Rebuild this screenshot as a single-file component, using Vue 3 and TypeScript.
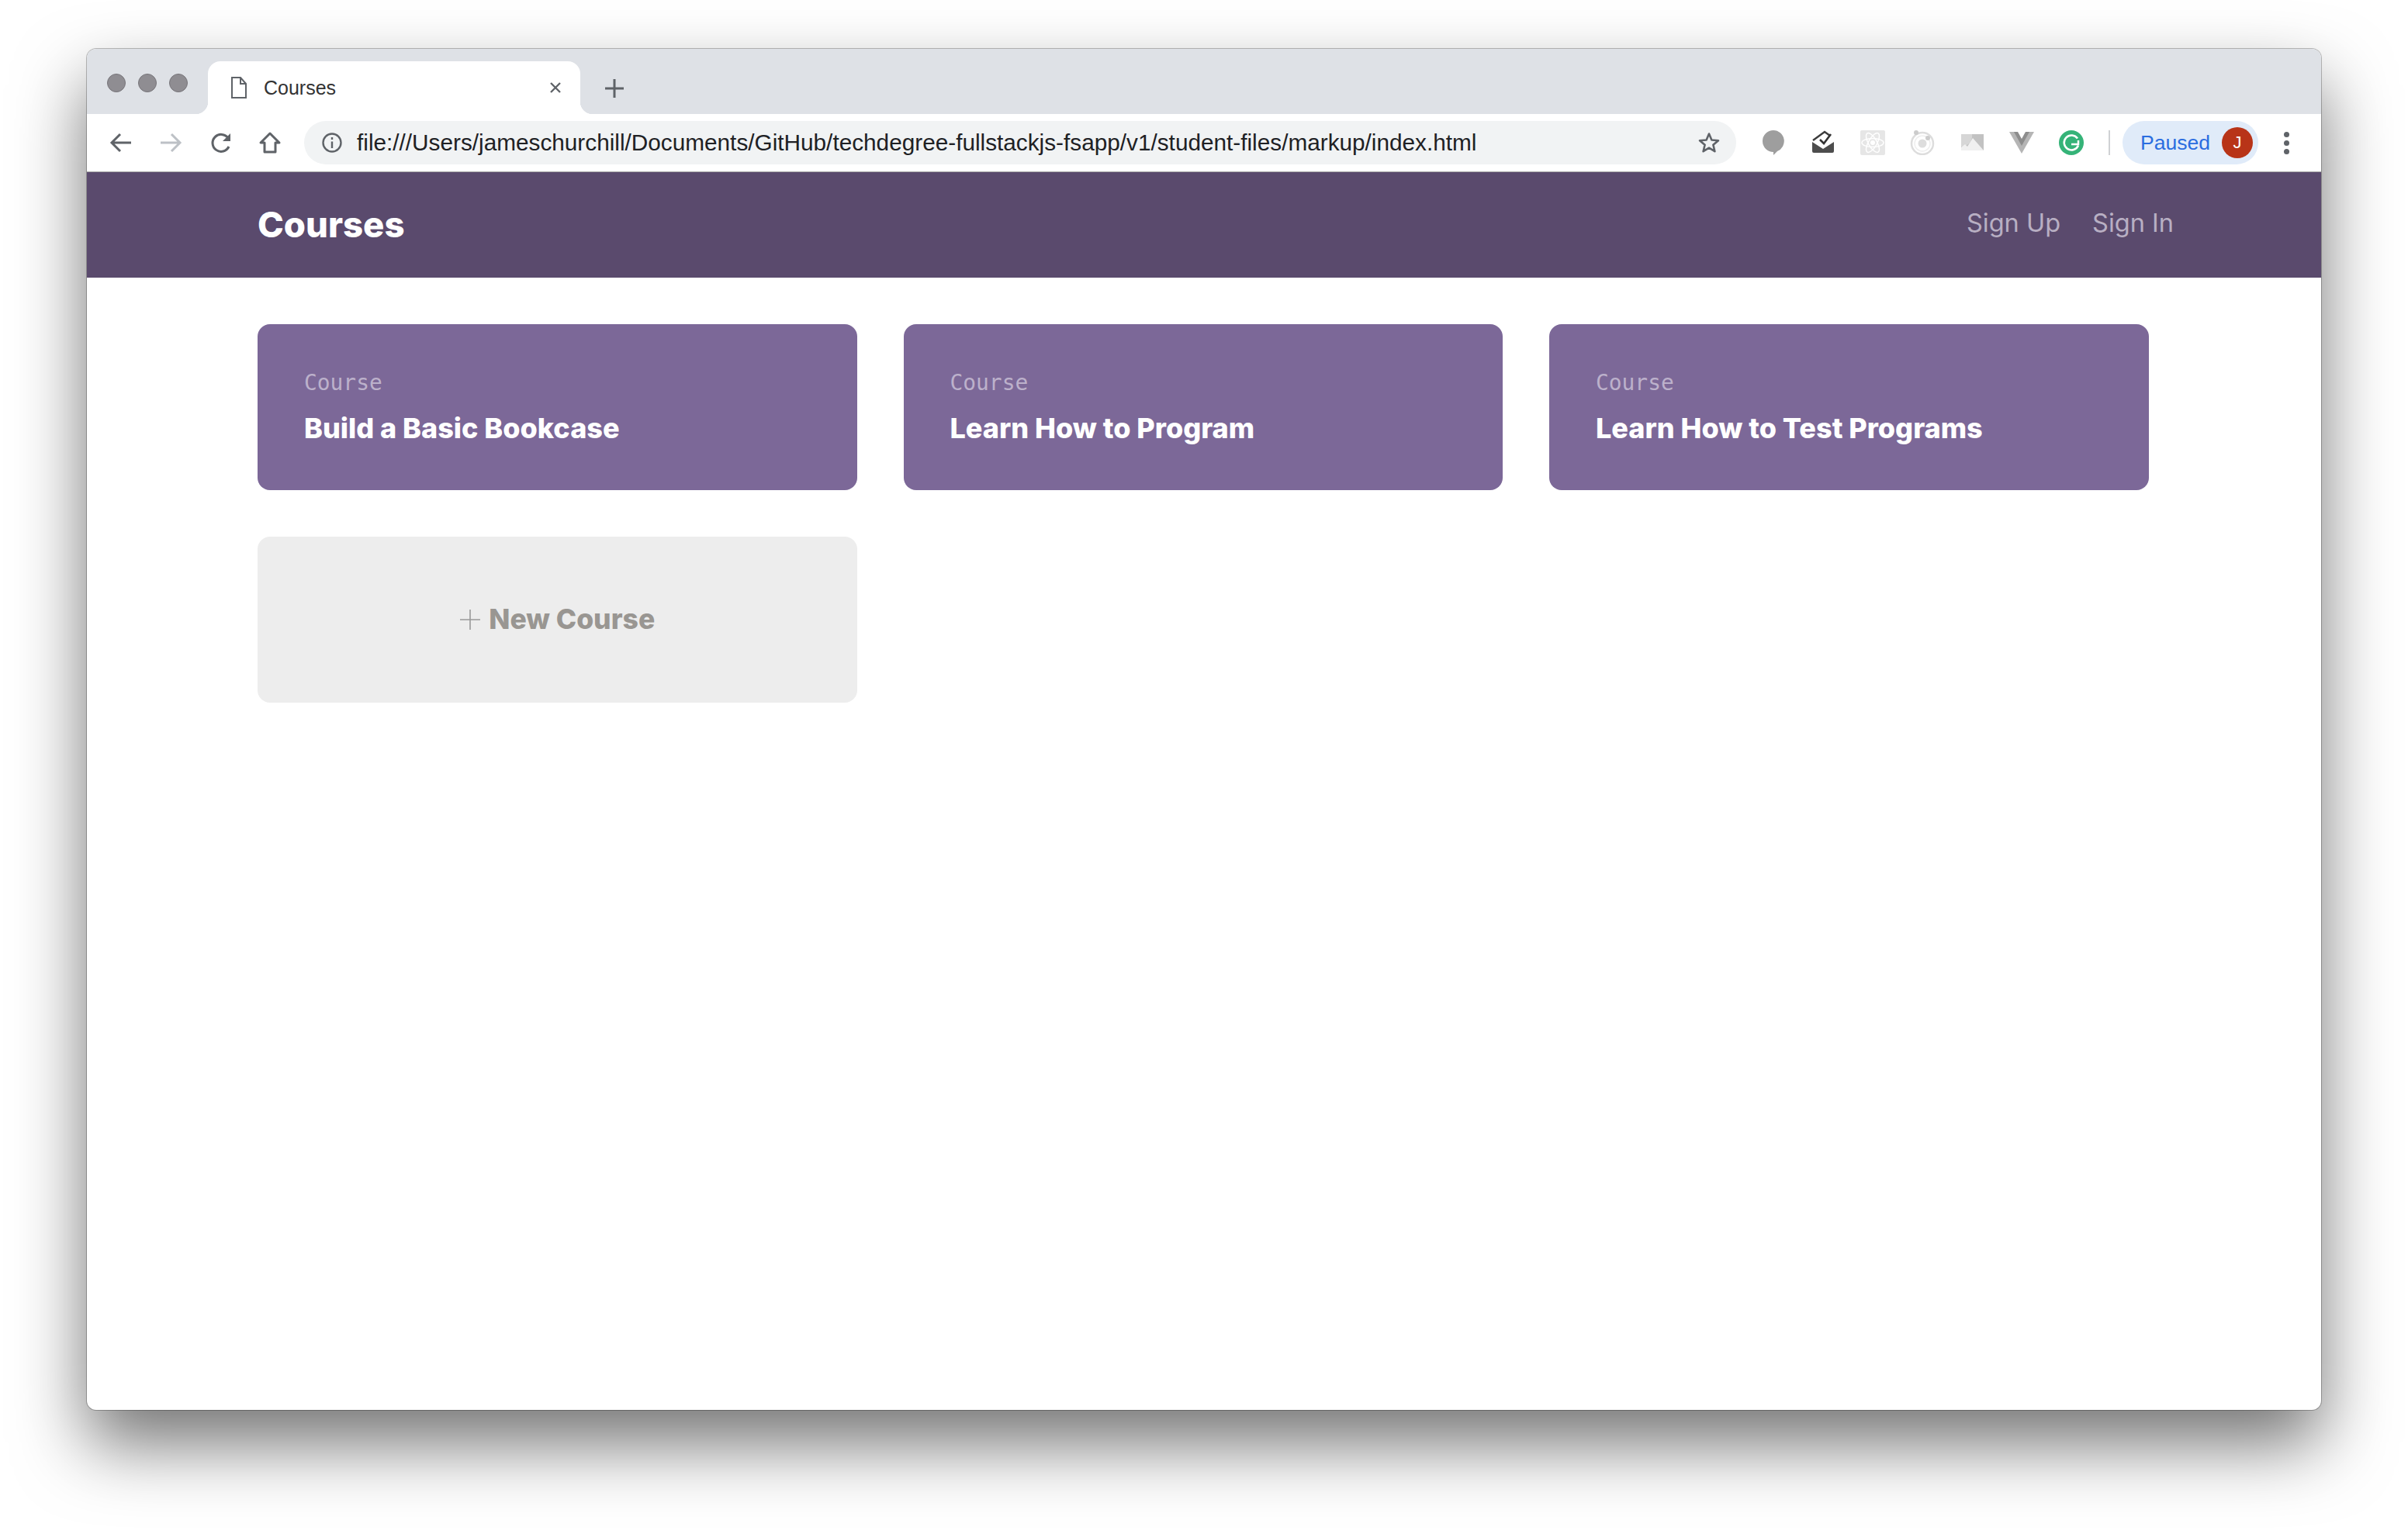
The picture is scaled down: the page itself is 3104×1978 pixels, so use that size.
<script setup lang="ts">
const courses = ['Build a Basic Bookcase', 'Learn How to Program', 'Learn How to Test Programs'];
const url = 'file:///Users/jameschurchill/Documents/GitHub/techdegree-fullstackjs-fsapp/v1/student-files/markup/index.html';
</script>

<template>
	<div class="page">
		<div class="window">
			<div class="tabstrip">
				<div class="lights"><i></i><i></i><i></i></div>
				<div class="tab">
					<svg class="file" width="20" height="28" viewBox="0 0 20 28" fill="none" stroke="#5f6368" stroke-width="2">
						<path d="M1 1h11l7 8v18H1z" />
						<path d="M12 1v8h7" />
					</svg>
					<span class="tab-title">Courses</span>
					<svg class="close" width="16" height="16" viewBox="0 0 16 16" stroke="#5f6368" stroke-width="2.4">
						<path d="M2 2l12 12M14 2L2 14" />
					</svg>
				</div>
				<svg class="plus" width="24" height="24" viewBox="0 0 24 24" stroke="#5f6368" stroke-width="3">
					<path d="M12 0v24M0 12h24" />
				</svg>
			</div>

			<div class="toolbar">
				<svg class="nav-ico" width="32" height="32" viewBox="0 0 32 32" fill="none" stroke="#5f6368" stroke-width="3">
					<path d="M29 16H4M15 5L4 16l11 11" />
				</svg>
				<svg class="nav-ico" width="32" height="32" viewBox="0 0 32 32" fill="none" stroke="#bdc1c6" stroke-width="3">
					<path d="M3 16h25M17 5l11 11-11 11" />
				</svg>
				<svg class="nav-ico reload" width="32" height="32" viewBox="0 0 32 32" fill="none">
					<path d="M25 21a11 11 0 1 1-1-11" stroke="#5f6368" stroke-width="3" />
					<path d="M27 4v10H17z" fill="#5f6368" />
				</svg>
				<svg class="nav-ico" width="32" height="32" viewBox="0 0 32 32" fill="none" stroke="#5f6368" stroke-width="3">
					<path d="M16 4L4 16h5v12h14V16h5z" stroke-linejoin="round" />
				</svg>
				<div class="omnibox">
					<svg width="28" height="28" viewBox="0 0 28 28" fill="none" stroke="#5f6368" stroke-width="2.4">
						<circle cx="14" cy="14" r="11.5" />
						<path d="M14 12.5V21" />
						<path d="M14 7v3" />
					</svg>
					<span class="url">{{ url }}</span>
					<svg class="star" width="30" height="30" viewBox="0 0 30 30" fill="none" stroke="#5f6368" stroke-width="2.6">
						<path d="M15 3.5l3.4 8 8.600.7-6.600 5.600 2 8.400-7.400-4.500-7.400 4.500 2-8.400L3 12.200l8.600-.7z" stroke-linejoin="round" />
					</svg>
				</div>
				<div class="extensions">
					<svg width="32" height="32" viewBox="0 0 32 32">
						<path d="M16 0a14 14 0 0 1 5 27l-5 5v-4a14 14 0 0 1 0-28z" fill="#9e9e9e" />
					</svg>
					<svg width="32" height="32" viewBox="0 0 32 32">
						<path d="M2 15l14 9 14-9v12a2 2 0 0 1-2 2H4a2 2 0 0 1-2-2z" fill="#4d4d4d" />
						<path d="M3 13L18 2l7 5" fill="none" stroke="#3c3c3c" stroke-width="2.400" />
						<path d="M12 12l5 5 9-12" fill="none" stroke="#333" stroke-width="2.600" />
					</svg>
					<svg width="32" height="32" viewBox="0 0 32 32">
						<rect width="32" height="32" rx="2" fill="#e6e6e6" />
						<g fill="none" stroke="#fff" stroke-width="1.500">
							<ellipse cx="16" cy="16" rx="14" ry="5.500" />
							<ellipse cx="16" cy="16" rx="14" ry="5.500" transform="rotate(60 16 16)" />
							<ellipse cx="16" cy="16" rx="14" ry="5.500" transform="rotate(120 16 16)" />
						</g>
						<circle cx="16" cy="16" r="3" fill="#fff" />
					</svg>
					<svg width="32" height="32" viewBox="0 0 32 32">
						<circle cx="16" cy="17" r="14" fill="none" stroke="#ddd" stroke-width="2.500" />
						<circle cx="16" cy="17" r="10" fill="none" stroke="#eee" stroke-width="1.500" />
						<circle cx="16" cy="17" r="5.500" fill="#ddd" />
						<circle cx="8" cy="3" r="3" fill="#ccc" />
						<circle cx="23" cy="10" r="3" fill="#ccc" />
					</svg>
					<svg width="32" height="32" viewBox="0 0 32 32">
						<rect x="2" y="5" width="29" height="21" fill="#c2c2c2" />
						<path d="M2 5h14a14 14 0 0 1-14 16z" fill="#d6d6d6" />
						<path d="M2 26v-4l5-4 3 3 7-11 14 16z" fill="#f0f0f0" />
					</svg>
					<svg width="32" height="32" viewBox="0 0 32 32">
						<path d="M0 2h32L16 30z" fill="#b5b5b5" />
						<path d="M6 2h20L16 20z" fill="#8d8d8d" />
						<path d="M11 2h10l-5 9z" fill="#fff" />
					</svg>
					<svg width="32" height="32" viewBox="0 0 32 32">
						<circle cx="16" cy="16" r="16" fill="#35b378" />
						<path d="M24 10.500a9.500 9.500 0 1 0 1 9" fill="none" stroke="#fff" stroke-width="2.500" />
						<path d="M16 18h9v-5" fill="none" stroke="#fff" stroke-width="2.500" />
					</svg>
				</div>
				<div class="divider"></div>
				<div class="paused">
					<span>Paused</span>
					<b class="avatar">J</b>
				</div>
				<div class="menu"><i></i><i></i><i></i></div>
			</div>

			<header class="site-header">
				<h1>Courses</h1>
				<nav>
					<a>Sign Up</a>
					<a>Sign In</a>
				</nav>
			</header>

			<main class="grid">
				<div v-for="course in courses" :key="course" class="card">
					<span class="label">Course</span>
					<h3>{{ course }}</h3>
				</div>
				<div class="card new">
					<h3>
						<svg width="28" height="28" viewBox="0 0 28 28" stroke="#999" stroke-width="1.600">
							<path d="M14 1v26M1 14h26" />
						</svg>
						New Course
					</h3>
				</div>
			</main>
		</div>
	</div>
</template>

<style>
html,
body {
	margin: 0;
	background: #fff;
}
</style>

<style scoped>
.page {
	width: 3104px;
	height: 1978px;
	padding: 63px 0 0 112px;
	box-sizing: border-box;
	overflow: hidden;
	background: #fff;
}
.window {
	width: 2880px;
	height: 1755px;
	border-radius: 12px;
	overflow: hidden;
	background: #fff;
	box-shadow: 0 44px 90px rgba(0, 0, 0, 0.55), 0 0 0 1px rgba(0, 0, 0, 0.25);
	font-family: 'Liberation Sans', Arial, sans-serif;
}
.tabstrip {
	height: 84px;
	background: #dee1e6;
	display: flex;
	align-items: flex-end;
}
.lights {
	display: flex;
	gap: 16px;
	margin: 0 0 28px 26px;
}
.lights i {
	width: 24px;
	height: 24px;
	box-sizing: border-box;
	border-radius: 50%;
	background: #8f8d92;
	border: 1px solid #77757a;
}
.tab {
	position: relative;
	width: 480px;
	height: 68px;
	margin-left: 26px;
	padding: 0 24px 0 30px;
	box-sizing: border-box;
	background: #fff;
	border-radius: 16px 16px 0 0;
	display: flex;
	align-items: center;
}
.tab::before,
.tab::after {
	content: '';
	position: absolute;
	bottom: 0;
	width: 16px;
	height: 16px;
}
.tab::before {
	left: -16px;
	background: radial-gradient(circle at 0 0, #dee1e6 16px, #fff 16.5px);
}
.tab::after {
	right: -16px;
	background: radial-gradient(circle at 100% 0, #dee1e6 16px, #fff 16.5px);
}
.tab-title {
	margin-left: 22px;
	font-size: 25px;
	color: #333;
	flex: 1;
}
.plus {
	margin: 0 0 21px 32px;
}
.toolbar {
	height: 74px;
	background: #fff;
	display: flex;
	align-items: center;
}
.nav-ico {
	flex: none;
	margin-left: 32px;
}
.nav-ico:first-child {
	margin-left: 28px;
}
.nav-ico.reload {
	margin-left: 34px;
	margin-right: -2px;
}
.omnibox {
	width: 1846px;
	height: 56px;
	margin-left: 28px;
	padding: 0 20px 0 22px;
	box-sizing: border-box;
	background: #f1f3f4;
	border-radius: 28px;
	display: flex;
	align-items: center;
	flex: none;
}
.url {
	flex: 1;
	margin-left: 18px;
	font-size: 29.75px;
	color: #202124;
	white-space: nowrap;
}
.extensions {
	display: flex;
	gap: 32px;
	margin-left: 32px;
}
.extensions svg {
	display: block;
}
.divider {
	width: 2px;
	height: 32px;
	margin-left: 32px;
	background: #cfd1d4;
}
.paused {
	width: 175px;
	height: 56px;
	margin-left: 16px;
	padding: 0 7px 0 23px;
	box-sizing: border-box;
	background: #e0ebf9;
	border-radius: 28px;
	display: flex;
	align-items: center;
	justify-content: space-between;
	font-size: 26.5px;
	color: #2a6de0;
}
.avatar {
	width: 40px;
	height: 40px;
	border-radius: 50%;
	background: #b83418;
	color: #fff;
	font-weight: 400;
	font-size: 22px;
	text-align: center;
	line-height: 40px;
}
.menu {
	display: flex;
	flex-direction: column;
	gap: 4px;
	margin-left: 33px;
}
.menu i {
	width: 7px;
	height: 7px;
	border-radius: 50%;
	background: #5f6368;
}
.site-header {
	height: 137px;
	padding: 0 190px 6px 220px;
	box-sizing: border-box;
	background: #5a4a6d;
	border-top: 1px solid #aaa;
	display: flex;
	align-items: center;
	justify-content: space-between;
	font-family: Inter, sans-serif;
	color: #fff;
}
.site-header h1 {
	margin: 5px 0 0;
	font-size: 45.5px;
	font-weight: 800;
}
.site-header nav {
	display: flex;
	gap: 41px;
	font-size: 32.5px;
	color: #b8afc3;
}
.grid {
	display: grid;
	grid-template-columns: repeat(3, 772.5px);
	gap: 60px;
	padding: 60px 0 0 220px;
	font-family: Inter, sans-serif;
}
.card {
	height: 214px;
	padding: 60px 60px 0;
	box-sizing: border-box;
	background: #7c6898;
	border-radius: 16px;
}
.label {
	display: block;
	font-family: 'DejaVu Sans Mono', monospace;
	font-size: 27.9px;
	line-height: 32px;
	color: #bcb1cb;
}
.card h3 {
	margin: 19px 0 0;
	font-size: 36px;
	line-height: 46px;
	font-weight: 800;
	color: #fff;
}
.card.new {
	padding: 0;
	background: #ededed;
	display: flex;
	align-items: center;
	justify-content: center;
}
.card.new h3 {
	margin: 0;
	font-size: 35.5px;
	color: #999692;
	display: flex;
	align-items: center;
	gap: 10px;
}
</style>
